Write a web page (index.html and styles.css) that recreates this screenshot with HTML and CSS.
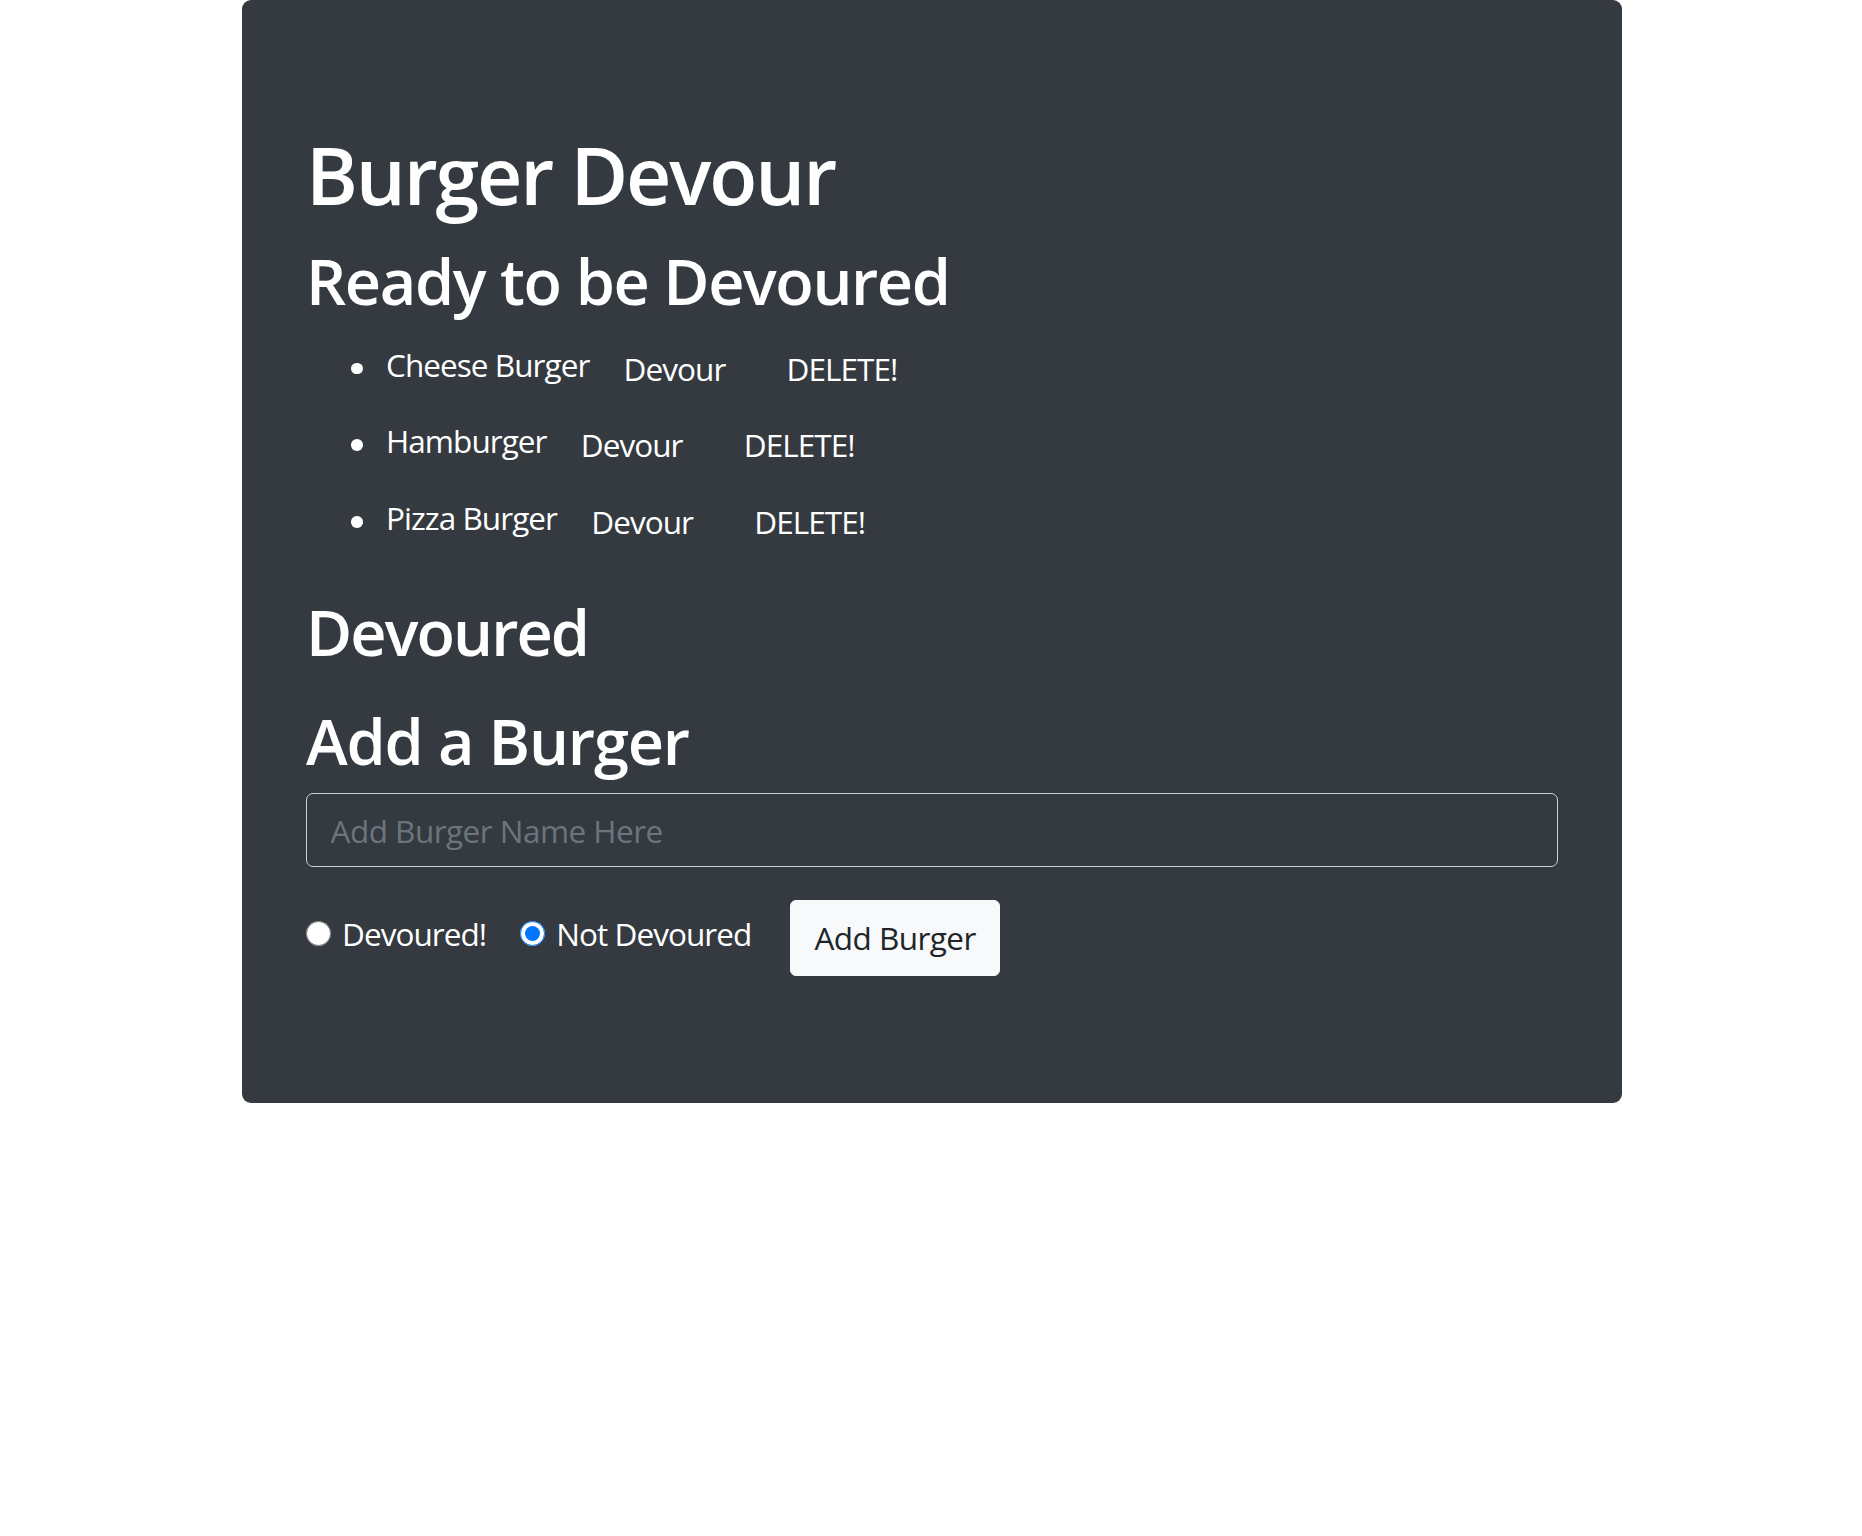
FILE: index.html
```html
<!DOCTYPE html>
<html lang="en">
<head>
<meta charset="utf-8">
<title>Burger Devour</title>
<link rel="stylesheet" href="styles.css">
</head>
<body>
<div class="jumbotron">
  <h1 class="title">Burger Devour</h1>
  <h2 class="section ready">Ready to be Devoured</h2>
  <ul class="burger-list">
    <li>Cheese Burger <button class="link-btn">Devour</button> <button class="link-btn">DELETE!</button></li>
    <li>Hamburger <button class="link-btn">Devour</button> <button class="link-btn">DELETE!</button></li>
    <li>Pizza Burger <button class="link-btn">Devour</button> <button class="link-btn">DELETE!</button></li>
  </ul>
  <h2 class="section devoured">Devoured</h2>
  <h2 class="section add">Add a Burger</h2>
  <form class="add-form">
    <input class="form-control" type="text" placeholder="Add Burger Name Here">
    <div class="form-row">
      <label class="check first"><input type="radio" name="devoured" value="1"><span>Devoured!</span></label>
      <label class="check second"><input type="radio" name="devoured" value="0" checked><span>Not Devoured</span></label>
      <button type="button" class="btn-light">Add Burger</button>
    </div>
  </form>
</div>
</body>
</html>
```

FILE: styles.css
```css
html, body {
  margin: 0;
  padding: 0;
  background: #ffffff;
}

body {
  padding-left: 2px;
  font-family: "Open Sans", "Noto Sans", sans-serif;
  font-size: 31.5px;
  line-height: 47.25px;
  letter-spacing: -0.03em;
  color: #212529;
}

.jumbotron {
  box-sizing: border-box;
  width: 1380px;
  margin: 0 auto;
  padding: 128px 64px 127.25px;
  background: #343a40;
  border-radius: 9px;
  color: #ffffff;
}

.title {
  margin: 0 0 20px;
  font-size: 78.75px;
  line-height: 94.5px;
  font-weight: 600;
  letter-spacing: -0.027em;
}

.section {
  margin: 0;
  font-size: 63px;
  line-height: 75.6px;
  font-weight: 600;
  letter-spacing: -0.022em;
}

.ready { margin-bottom: 8.5px; }
.devoured { margin-bottom: 34px; letter-spacing: -0.03em; }
.add { margin-bottom: 14px; letter-spacing: -0.018em; }

.burger-list {
  margin: 0 0 37px;
  padding-left: 80px;
  list-style: none;
}

.burger-list li {
  position: relative;
  line-height: 76.75px;
}

.burger-list li::before {
  content: "";
  position: absolute;
  left: -35px;
  top: 36px;
  width: 11.5px;
  height: 11.5px;
  border-radius: 50%;
  background: #ffffff;
}

.link-btn {
  display: inline-block;
  padding: 0 26px;
  border: 1px solid transparent;
  background: transparent;
  color: #ffffff;
  font: inherit;
  line-height: 47.25px;
  letter-spacing: inherit;
  vertical-align: -4px;
  cursor: pointer;
}

.add-form {
  margin: 0;
}

.form-control {
  display: block;
  box-sizing: border-box;
  width: 100%;
  height: 74px;
  margin: 0 0 33px;
  padding: 13px 23.6px;
  font: inherit;
  letter-spacing: -0.017em;
  line-height: 47.25px;
  color: #ffffff;
  background: transparent;
  border: 1px solid #ced4da;
  border-radius: 7px;
  outline: none;
}

.form-control::placeholder {
  color: #6c757d;
  opacity: 1;
}

.form-row {
  display: flex;
  align-items: flex-start;
}

.check {
  display: flex;
  align-items: center;
  gap: 11px;
  margin-top: 9.5px;
  color: #ffffff;
}

.check input {
  width: 25px;
  height: 25px;
  margin: 0;
}

.first { margin-right: 34px; }
.second { margin-right: 38.5px; }

.btn-light {
  box-sizing: border-box;
  height: 75.7px;
  padding: 13.2px 23.7px;
  border: 1px solid #f8f9fa;
  border-radius: 6px;
  background: #f8f9fa;
  color: #212529;
  font: inherit;
  letter-spacing: -0.018em;
  line-height: 47.25px;
  cursor: pointer;
}
```
